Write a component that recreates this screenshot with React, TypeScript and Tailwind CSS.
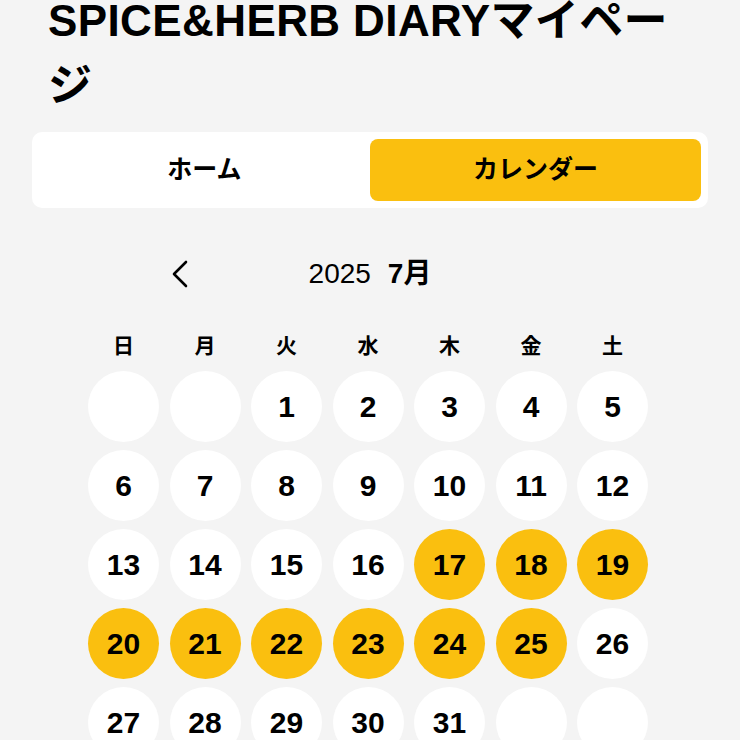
import React from 'react';

const WEEKDAYS = ['日', '月', '火', '水', '木', '金', '土'];

// July 2025 starts on Tuesday
const DAYS: (number | null)[] = [
  null, null, 1, 2, 3, 4, 5,
  6, 7, 8, 9, 10, 11, 12,
  13, 14, 15, 16, 17, 18, 19,
  20, 21, 22, 23, 24, 25, 26,
  27, 28, 29, 30, 31, null, null,
];

const marked = new Set([17, 18, 19, 20, 21, 22, 23, 24, 25]);

const DayCell = ({ day }: { day: number | null }) => {
  const active = day !== null && marked.has(day);
  return (
    <div className="flex justify-center">
      <div
        className={`w-[71px] h-[71px] rounded-full flex items-center justify-center text-[30px] font-bold text-black ${
          active ? 'bg-[#fabf0f]' : 'bg-white'
        }`}
      >
        {day ?? ''}
      </div>
    </div>
  );
};

const App: React.FC = () => {
  return (
    <div
      className="min-h-screen bg-[#f4f4f4] px-8 text-black overflow-hidden"
      style={{ fontFamily: '"Liberation Sans", "Noto Sans CJK JP", sans-serif' }}
    >
      <h1 className="px-4 text-[44px] font-bold leading-[65px] tracking-[0.4px] -mt-[12px]">
        SPICE&amp;HERB DIARYマイページ
      </h1>

      <div className="mt-[14px] bg-white rounded-[10px] p-[7px] flex">
        <button className="flex-1 h-[62px] rounded-lg text-[25px] font-bold">ホーム</button>
        <button className="flex-1 h-[62px] rounded-lg bg-[#fabf0f] text-[25px] font-bold">
          カレンダー
        </button>
      </div>

      <div className="mt-[46px] w-[420px] mx-auto flex items-center justify-between h-10">
        <button className="w-10 h-10 flex items-center justify-center">
          <svg width="18" height="28" viewBox="0 0 18 28" fill="none">
            <polyline
              points="15,2 3,14 15,26"
              stroke="black"
              strokeWidth="2.6"
              strokeLinecap="round"
              strokeLinejoin="round"
            />
          </svg>
        </button>
        <div className="flex items-baseline gap-[17px]">
          <span className="text-[28px]">2025</span>
          <span className="text-[28px] font-bold">7月</span>
        </div>
        <div className="w-10 h-10" />
      </div>

      <div className="mt-[37px] w-[560px] ml-[56px] grid grid-cols-7 gap-x-[10.5px]">
        {WEEKDAYS.map((w) => (
          <div key={w} className="text-center text-[21px] font-semibold leading-[30px]">
            {w}
          </div>
        ))}
      </div>

      <div className="mt-[10px] w-[560px] ml-[56px] grid grid-cols-7 gap-x-[10.5px] gap-y-[8px] pb-8">
        {DAYS.map((d, i) => (
          <DayCell key={i} day={d} />
        ))}
      </div>
    </div>
  );
};

export default App;
